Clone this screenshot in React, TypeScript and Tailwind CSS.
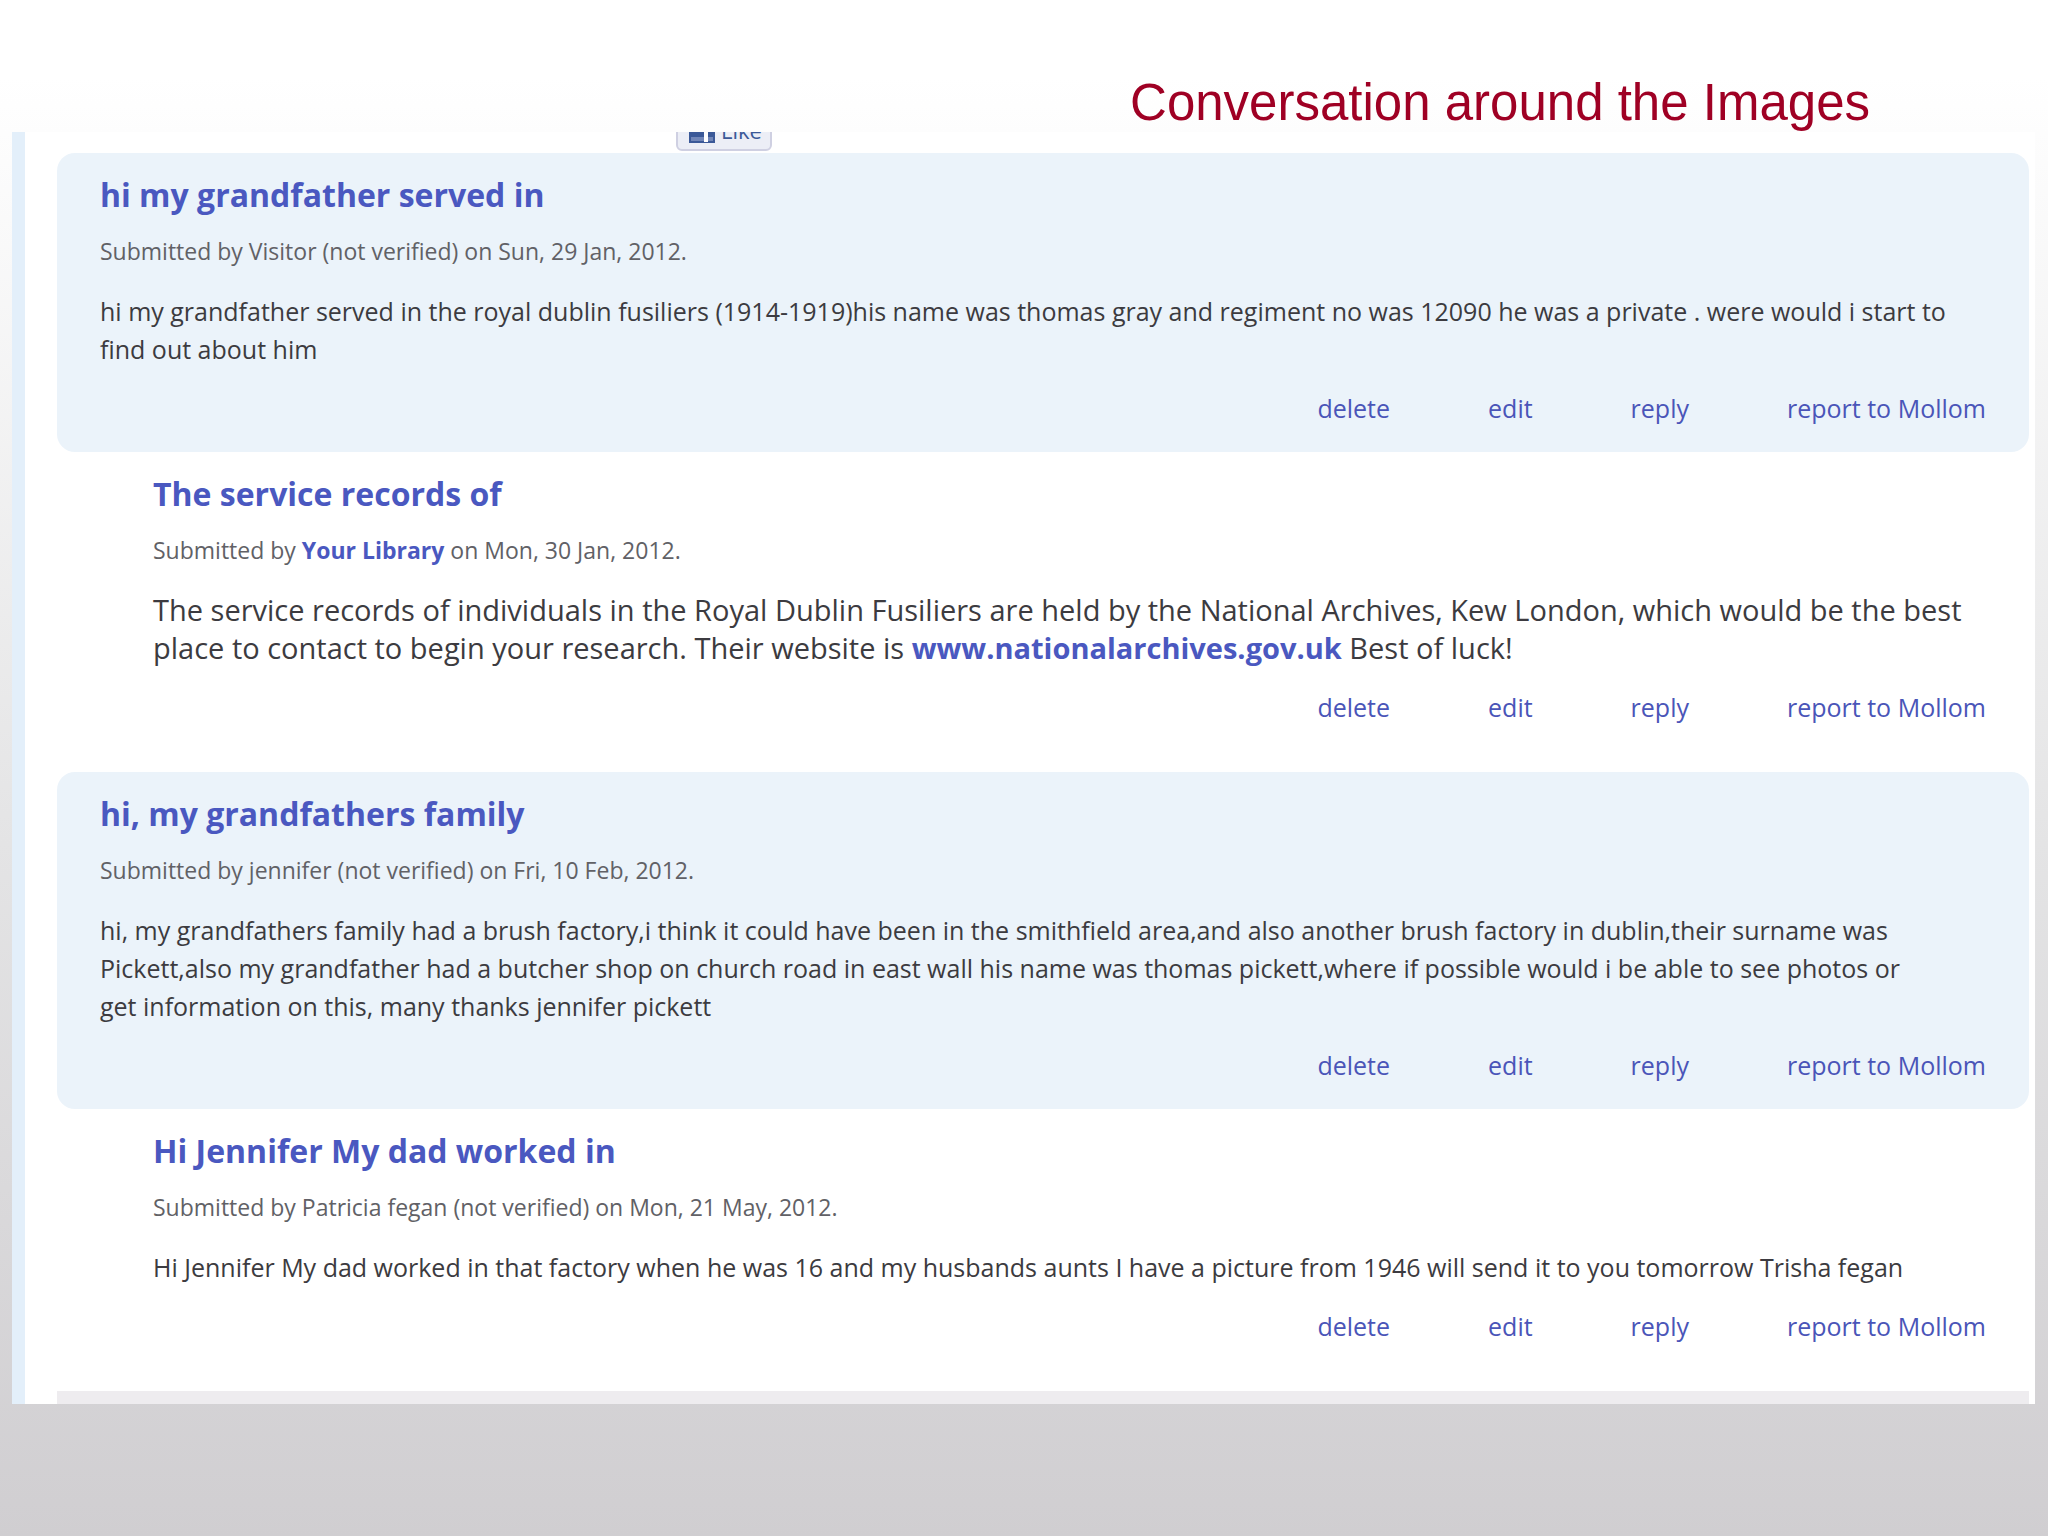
import React from 'react';

interface CommentData {
  title: string;
  author: React.ReactNode;
  date: string;
  body: React.ReactNode;
  isReply?: boolean;
  largeBody?: boolean;
}

const comments: CommentData[] = [
  {
    title: 'hi my grandfather served in',
    author: 'Visitor (not verified)',
    date: 'Sun, 29 Jan, 2012.',
    body: (
      <>
        hi my grandfather served in the royal dublin fusiliers (1914-1919)his name was thomas gray and regiment no was
        12090 he was a private . were would i start to <br />
        find out about him
      </>
    ),
  },
  {
    title: 'The service records of',
    author: <a href="#library" className="font-bold text-[#4a58c0]">Your Library</a>,
    date: 'Mon, 30 Jan, 2012.',
    body: (
      <>
        The service records of individuals in the Royal Dublin Fusiliers are held by the National Archives, Kew London,
        which would be the best <br />
        place to contact to begin your research. Their website is{' '}
        <a href="#archives" className="font-bold text-[#4a58c0]">www.nationalarchives.gov.uk</a> Best of luck!
      </>
    ),
    isReply: true,
    largeBody: true,
  },
  {
    title: 'hi, my grandfathers family',
    author: 'jennifer (not verified)',
    date: 'Fri, 10 Feb, 2012.',
    body: (
      <>
        hi, my grandfathers family had a brush factory,i think it could have been in the smithfield area,and also
        another brush factory in dublin,their surname was <br />
        Pickett,also my grandfather had a butcher shop on church road in east wall his name was thomas pickett,where if
        possible would i be able to see photos or <br />
        get information on this, many thanks jennifer pickett
      </>
    ),
  },
  {
    title: 'Hi Jennifer My dad worked in',
    author: 'Patricia fegan (not verified)',
    date: 'Mon, 21 May, 2012.',
    body: 'Hi Jennifer My dad worked in that factory when he was 16 and my husbands aunts I have a picture from 1946 will send it to you tomorrow Trisha fegan',
    isReply: true,
  },
];

const actions = ['delete', 'edit', 'reply', 'report to Mollom'];

const Comment: React.FC<{ comment: CommentData }> = ({ comment }) => (
  <article
    className={
      comment.isReply
        ? 'pt-[22px] pb-[49px] pl-24 pr-[43px]'
        : 'rounded-[18px] bg-[#ebf3fa] pt-[22px] pb-7 pl-[43px] pr-[43px]'
    }
  >
    <h2 className="text-[32px] leading-10 font-bold text-[#4a58c0]">{comment.title}</h2>
    <p className="mt-5 text-[23px] leading-8 text-[#616166]">
      Submitted by {comment.author} on {comment.date}
    </p>
    <p
      className={
        comment.largeBody
          ? 'mt-[25px] text-[29px] leading-[38px] text-[#3c3b40]'
          : 'mt-[25px] text-[25px] leading-[38px] text-[#3c3b40]'
      }
    >
      {comment.body}
    </p>
    <nav className="mt-6 flex justify-end gap-[98px] text-[25px] leading-8 text-[#4a55b8]">
      {actions.map((action) => (
        <a key={action} href={`#${action.replace(/ /g, '-')}`}>
          {action}
        </a>
      ))}
    </nav>
  </article>
);

const LikeButton: React.FC = () => (
  <button
    type="button"
    className="flex h-10 w-24 items-center gap-1.5 rounded-[6px] border-2 border-[#cfd0e2] bg-[#eceef6] pb-0.5 pl-[11px] text-[22px] leading-8 text-[#3b5998]"
  >
    <svg viewBox="0 0 26 26" className="h-[26px] w-[26px]" aria-hidden="true">
      <rect width="26" height="26" fill="#3b5998" />
      <rect x="2" y="20" width="22" height="4" fill="#7186b8" />
      <path d="M15 25V15h-3v-4h3V8c0-3 2-5 5-5h3v4h-2c-1 0-2 1-2 2v2h4l-1 4h-3v10z" fill="#fff" />
    </svg>
    Like
  </button>
);

const App: React.FC = () => {
  return (
    <div className="min-h-screen bg-linear-to-b from-white from-5% via-[#e4e4e5] via-55% to-[#d0ced1] font-['Open_Sans',sans-serif]">
      <header className="flex h-[132px] items-end justify-end pr-[178px]">
        <h1 className="font-['Liberation_Sans',Arial,sans-serif] text-[51px] leading-[58px] text-[#9f0024]">
          Conversation around the Images
        </h1>
      </header>
      <main className="ml-3 mr-[13px] overflow-hidden border-l-[13px] border-[#e3effa] bg-white pl-8 pr-1.5">
        {/* Only the lower edge of the share button shows above the thread */}
        <div className="flex h-[21px] items-end overflow-hidden pb-0.5 pl-[619px]">
          <LikeButton />
        </div>
        {comments.map((comment) => (
          <Comment key={comment.title} comment={comment} />
        ))}
        <div className="h-[13px] bg-[#eeecef]" />
      </main>
    </div>
  );
};

export default App;
